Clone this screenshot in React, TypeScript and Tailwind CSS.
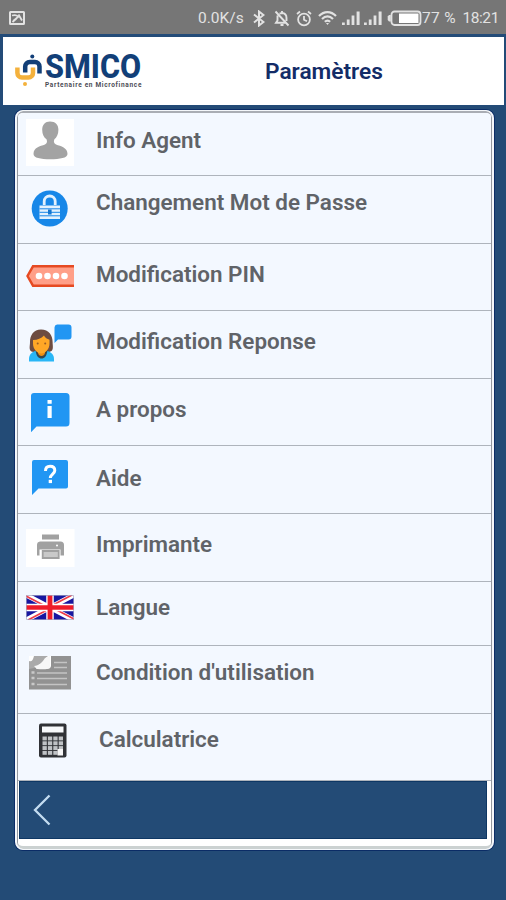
import type { ReactNode } from "react";
import clsx from "clsx";

interface SettingsItem {
  label: string;
  rowClass: string;
  labelClass: string;
  icon: ReactNode;
}

function AgentIcon() {
  return (
    <>
      <rect x="0" y="7" width="48" height="47" fill="#fff" />
      <path
        d="M24 9.500c-4.800 0-7.800 3.200-7.800 8.200 0 4.600 1.700 7.700 4.300 9.600 1 2.400.6 4.200-1.500 5.100-5 1.800-11.500 2.800-11.500 9.600 0 4 7 5.200 16.800 5.200S41.500 46 41.500 42c0-6.600-6.500-7.800-11.500-9.600-2.200-.9-2.600-2.700-1.600-5.100 2.300-1.900 4-5 4-9.600 0-5-3-8.200-8.400-8.200z"
        fill="#a3a3a3"
      />
    </>
  );
}

function LockIcon() {
  return (
    <>
      <circle cx="23.700" cy="32.500" r="18" fill="#1787e8" />
      <path d="M18.200 29v-3.500a5.500 5.500 0 0 1 11 0V29" fill="none" stroke="#e3f1fd" strokeWidth="2.800" />
      <path d="M13.500 29.500h20.500v13.500h-20.500z" fill="#e3f1fd" />
      <path d="M13.500 32.800h20.500M13.500 36.300h20.500M13.500 39.800h20.500" stroke="#1787e8" strokeWidth="1" />
      <path d="M22 33.500h3.600v5h-3.600z" fill="#1476d0" />
    </>
  );
}

function PinIcon() {
  return (
    <>
      <path d="M48 22.300H7L1.500 32 7 41.700H48z" fill="#ff9f88" />
      <path d="M48 22.300H7L1.500 32 7 41.700H48" fill="none" stroke="#e64a22" strokeWidth="2.400" />
      {[13, 21.5, 30, 38.500].map((cx) => (
        <circle key={cx} cx={cx} cy="32" r="3.300" fill="#fff" />
      ))}
    </>
  );
}

function ResponseIcon() {
  return (
    <>
      <path
        d="M15 18.500C7.500 18.500 4 24.500 4 31c0 4-1.200 7 .8 9 3 2.200 17.400 2.200 20.700 0 2.200-2 1.100-5.500 1.100-9 0-6.500-3.600-12.500-11.600-12.500z"
        fill="#6d4c41"
      />
      <path d="M3 50.500v-2.500c0-5.500 4.300-7.800 8.500-8.500h7.500c4.500.7 9 3 9 8.500v2.500z" fill="#29b6f6" />
      <path d="M9.500 39.500c1 6 3 8 6 8s5-2 6-8z" fill="#37474f" />
      <path d="M12 37h7v5c-.5 2-1.800 3-3.500 3S12.500 44 12 42z" fill="#ef8d12" />
      <path d="M7 29c5-.2 8-1.500 11-4.500 1 2 3.200 3.600 5.500 4.300v3.700c0 5.500-4 10-8.200 10S7 38 7 32.500z" fill="#ffa726" />
      <circle cx="11.700" cy="32.500" r="1" fill="#9a5d24" />
      <circle cx="19.200" cy="32.500" r="1" fill="#9a5d24" />
      <path
        d="M31 13.500h11.500a3 3 0 0 1 3 3v9a3 3 0 0 1-3 3H32L28.500 32V16.500a3 3 0 0 1 2.500-3z"
        fill="#2196f3"
      />
    </>
  );
}

function AboutIcon() {
  return (
    <>
      <path d="M8 14h32a3.500 3.500 0 0 1 3.500 3.500V44a3.500 3.500 0 0 1-3.500 3.500H10.500l-5.500 5.700V17a3 3 0 0 1 3-3z" fill="#2196f3" />
      <path d="M21.500 21h4.200v3.700h-4.200zM21.500 27h4.200v12h-4.200z" fill="#fff" />
    </>
  );
}

function HelpIcon() {
  return (
    <>
      <path d="M8 14h32a2 2 0 0 1 2 2v24.500a2 2 0 0 1-2 2H12.500L6 49V16a2 2 0 0 1 2-2z" fill="#2196f3" />
      <path
        d="M19.500 25c0-3.300 1.900-4.800 4.600-4.800s4.700 1.500 4.700 4.300c0 3.300-4.500 3.900-4.500 7.600"
        fill="none"
        stroke="#fff"
        strokeWidth="3"
      />
      <path d="M22.700 33.800h3.300v3.300h-3.300z" fill="#fff" />
    </>
  );
}

function PrinterIcon() {
  return (
    <>
      <rect x="0" y="15" width="48.500" height="38" fill="#fff" />
      <path d="M16 20.500h17v5H16z" fill="#a1a1a1" />
      <path
        d="M14 27.500h20.500a3.500 3.500 0 0 1 3.500 3.500v10.500h-3.500v-6h-21v6H11V31a3.500 3.500 0 0 1 3-3.500z"
        fill="#a1a1a1"
      />
      <path d="M16.700 37h16v7h-16z" fill="#c9c9c9" stroke="#a1a1a1" strokeWidth="1.800" />
      <circle cx="31" cy="31.500" r="1" fill="#fff" />
    </>
  );
}

function FlagIcon() {
  return (
    <svg x="0" y="13" width="48" height="25" viewBox="0 0 48 25" preserveAspectRatio="none">
      <path d="M0 0h48v25H0z" fill="#1717a0" />
      <path d="M0 0l48 25M48 0L0 25" stroke="#fff" strokeWidth="5" />
      <path d="M0 1l22 11.500M48 24L26 12.500M46 0L25 11M2 25l21-11" stroke="#ed3b48" strokeWidth="1.700" />
      <path d="M24 0v25M0 12.500h48" stroke="#fff" strokeWidth="7.500" />
      <path d="M24 0v25" stroke="#ee1c2a" strokeWidth="4.800" />
      <path d="M0 12.500h48" stroke="#ee1c2a" strokeWidth="4.500" />
      <path d="M.5.500h47v24H.5z" fill="none" stroke="#a3a3c0" strokeWidth=".7" />
    </svg>
  );
}

function TermsIcon() {
  return (
    <>
      <path d="M3 10h42v33.500H3z" fill="#929292" />
      <path d="M3 10h22v10c0 2-2 3-5 3h-9l-8-7z" fill="#fff" />
      <path d="M3 15c2.500 1 4-.5 5-5h14c-3 2-4 4-4.500 7-3 .2-5 1.500-6.500 4.500L3 23z" fill="#aaa" />
      <path d="M8 20c5-.5 8-3 11-8l5-2v12c-4 2-9 1-13 1z" fill="#f7f7f7" />
      <path d="M28 16.500h13M28 21.500h13M11 27h30M11 32.500h30M11 38.500h30" stroke="#c4c4c4" strokeWidth="1.600" />
      <path d="M5.500 26.500h3M5.500 32h3M5.500 38h3" stroke="#c9c9c9" strokeWidth="2.500" />
    </>
  );
}

function CalculatorIcon() {
  return (
    <>
      <rect x="13" y="9.500" width="27.500" height="34" rx="2" fill="#303236" />
      <path d="M16 12.500h21.500v6H16z" fill="#f7f9fb" />
      {[22.500, 27.300, 32.100, 36.900].map((y) =>
        [16.500, 21.900, 27.300, 32.700].map((x) => <rect key={`${x}-${y}`} x={x} y={y} width="4.300" height="3.900" fill="#bfc2c5" />),
      )}
      <path d="M31.500 35h5.500v6.500h-5.500z" fill="#f5f5f5" />
    </>
  );
}

const ITEMS: SettingsItem[] = [
  { label: "Info Agent", rowClass: "h-16", labelClass: "mt-3.5", icon: <AgentIcon /> },
  { label: "Changement Mot de Passe", rowClass: "h-[68px]", labelClass: "mt-3", icon: <LockIcon /> },
  { label: "Modification PIN", rowClass: "h-[67px]", labelClass: "mt-4", icon: <PinIcon /> },
  { label: "Modification Reponse", rowClass: "h-[68px]", labelClass: "mt-4", icon: <ResponseIcon /> },
  { label: "A propos", rowClass: "h-[67px]", labelClass: "mt-4", icon: <AboutIcon /> },
  { label: "Aide", rowClass: "h-[68px]", labelClass: "mt-[18px]", icon: <HelpIcon /> },
  { label: "Imprimante", rowClass: "h-[68px]", labelClass: "mt-4", icon: <PrinterIcon /> },
  { label: "Langue", rowClass: "h-16", labelClass: "mt-[11px]", icon: <FlagIcon /> },
  { label: "Condition d'utilisation", rowClass: "h-[68px]", labelClass: "mt-3", icon: <TermsIcon /> },
  { label: "Calculatrice", rowClass: "h-[67px]", labelClass: "mt-[11px] pl-[3px]", icon: <CalculatorIcon /> },
];

function SignalIcon() {
  return (
    <svg className="h-4 w-[19px]" viewBox="0 0 19 16" fill="#e2e2e2">
      <path d="M0 12.500h2.800V15H0zM4.800 9.500h2.800V15H4.800zM9.600 5.500h2.800V15H9.600zM14.600 1.500h3V15h-3z" />
    </svg>
  );
}

function StatusBar() {
  return (
    <div className="flex h-[34px] items-center bg-[#767676] pt-0.5 pr-[7px] pl-[9px] text-[#e2e2e2]">
      <svg className="h-[14px] w-4" viewBox="0 0 16 14">
        <rect x="1" y="1" width="14" height="12" rx=".5" fill="none" stroke="#e2e2e2" strokeWidth="2" />
        <path d="M3 4.500c3-.8 5.500 0 6 1.500L4.500 9.800M9.500 3.500L13 9.500M3.500 11l4-3.500" stroke="#e2e2e2" strokeWidth="1.800" fill="none" />
      </svg>
      <span className="mt-0.5 ml-[173px] w-[46px] text-[15.500px] whitespace-nowrap">0.0K/s</span>
      <svg className="ml-[9px] h-[17px] w-3" viewBox="0 0 12 17" fill="none" stroke="#e2e2e2" strokeWidth="2">
        <path d="M1 4.500l9.500 7.500L6 15.500v-14L10.500 5 1 12.500" />
      </svg>
      <svg className="ml-[9px] h-[17px] w-4" viewBox="0 0 16 17" fill="none" stroke="#e2e2e2" strokeWidth="1.900">
        <path d="M1.500 1.500l13 14M3.500 5.500v5L2 12.800h9.500M5.500 3.700L8 3c3 .2 4.500 2.500 4.500 5v3M6.500 15h3M8 1v2" />
      </svg>
      <svg className="ml-[6px] h-[17px] w-4" viewBox="0 0 16 17" fill="none" stroke="#e2e2e2" strokeWidth="1.800">
        <circle cx="8" cy="9.500" r="5.900" />
        <path d="M8 6v3.800l3 1.500M1 4l3-2.500M15 4l-3-2.500" />
      </svg>
      <svg className="ml-[6px] h-4 w-[19px]" viewBox="0 0 19 16" fill="none" stroke="#e2e2e2" strokeWidth="2.200">
        <path d="M1 6c5-5.300 12-5.300 17 0M4 9c3.500-3.500 7.500-3.500 11 0M6.800 11.800c1.700-1.500 3.700-1.500 5.400 0" />
        <path d="M8 13l1.500 2 1.500-2z" fill="#e2e2e2" stroke="none" />
      </svg>
      <span className="ml-[5px] flex gap-[3px]">
        <SignalIcon />
        <SignalIcon />
      </span>
      <svg className="ml-[4px] h-[17px] w-[35px]" viewBox="0 0 35 17">
        <rect x="4.500" y="1.500" width="29" height="13.500" rx="3" fill="none" stroke="#e2e2e2" strokeWidth="1.800" />
        <path d="M12 3.500h19.500v9.500H12z" fill="#fff" />
        <path d="M3.800 5H2L.7 6.500v3.500L2 11.500h1.800z" fill="#e2e2e2" />
      </svg>
      <span className="mt-0.5 w-[40px] text-[15.500px] tracking-[0.3px] whitespace-nowrap">77 %</span>
      <span className="mt-0.5 flex-1 text-right text-[15.500px] tracking-[-0.4px]">18:21</span>
    </div>
  );
}

function Logo() {
  return (
    <div className="flex w-[128px] items-start">
      <svg className="mt-0.5 h-[35px] w-[30px] shrink-0" viewBox="0 0 30 35" fill="none">
        <path
          d="M2.400 15.500v5.500a4.500 4.500 0 0 0 4.500 4.500h6.600a4.500 4.500 0 0 0 4.500-4.500v-5.500"
          stroke="#f4b13c"
          strokeWidth="4.500"
        />
        <path d="M10.200 20.500v-6a4.500 4.500 0 0 1 4.500-4.500h5.300a4.500 4.500 0 0 1 4.500 4.500V21.500" stroke="#123f78" strokeWidth="4.500" />
        <circle cx="17.300" cy="4.500" r="2" fill="#123f78" />
        <circle cx="10" cy="32" r="2" fill="#f4b13c" />
      </svg>
      <div className="w-[98px]">
        <p className="origin-left scale-x-[0.9] text-[34px] leading-[32px] font-extrabold whitespace-nowrap text-[#123f78]">SMICO</p>
        <p className="text-[6.500px] leading-[7px] font-bold tracking-[0.680px] whitespace-nowrap text-[#4c4c55]">
          Partenaire en Microfinance
        </p>
      </div>
    </div>
  );
}

function Header() {
  return (
    <header className="flex h-[72px] border-t-[3px] border-r-2 border-b border-l-[3px] border-[#234b78] bg-white">
      <div className="pt-[13px] pl-3">
        <Logo />
      </div>
      <h1 className="mt-[21px] ml-[122px] text-[22.700px] leading-7 font-semibold text-[#132c67]">Paramètres</h1>
    </header>
  );
}

export default function App() {
  return (
    <div className="flex h-[900px] w-[506px] flex-col overflow-hidden bg-[#234b76] font-[Roboto,sans-serif]">
      <StatusBar />
      <Header />
      <main className="mt-1 mr-3 ml-[15px] h-[740px] overflow-hidden rounded-[8px] border-x-2 border-t border-b border-[#f4f7fa] bg-white shadow-[0_0_0_1px_#0b2c66]">
        <div className="h-[738px] overflow-hidden rounded-[6px] border-x border-t-2 border-b-[3px] border-x-[#92979e] border-t-[#a9adb4] border-b-[#cbd1d1]">
          <ul className="-mt-px">
            {ITEMS.map((item) => (
              <li key={item.label} className={clsx("flex border-b border-[#aeb4bc] bg-[#f3f8ff] pl-2", item.rowClass)}>
                <svg className="h-[60px] w-[49px] shrink-0" viewBox="0 0 49 60">
                  {item.icon}
                </svg>
                <span className={clsx("ml-[21px] text-[22.450px] leading-7 font-semibold whitespace-nowrap text-[#606368]", item.labelClass)}>
                  {item.label}
                </span>
              </li>
            ))}
          </ul>
          <div className="mr-1 ml-px flex h-[58px] items-center border border-[#0e3764] bg-[#234b76] pl-[13px]">
            <svg className="h-8 w-[18px]" viewBox="0 0 18 32" fill="none" stroke="#c4dcf0" strokeWidth="2.300">
              <path d="M16.500 1.500L2 16l14.500 14.500" />
            </svg>
          </div>
        </div>
      </main>
    </div>
  );
}
